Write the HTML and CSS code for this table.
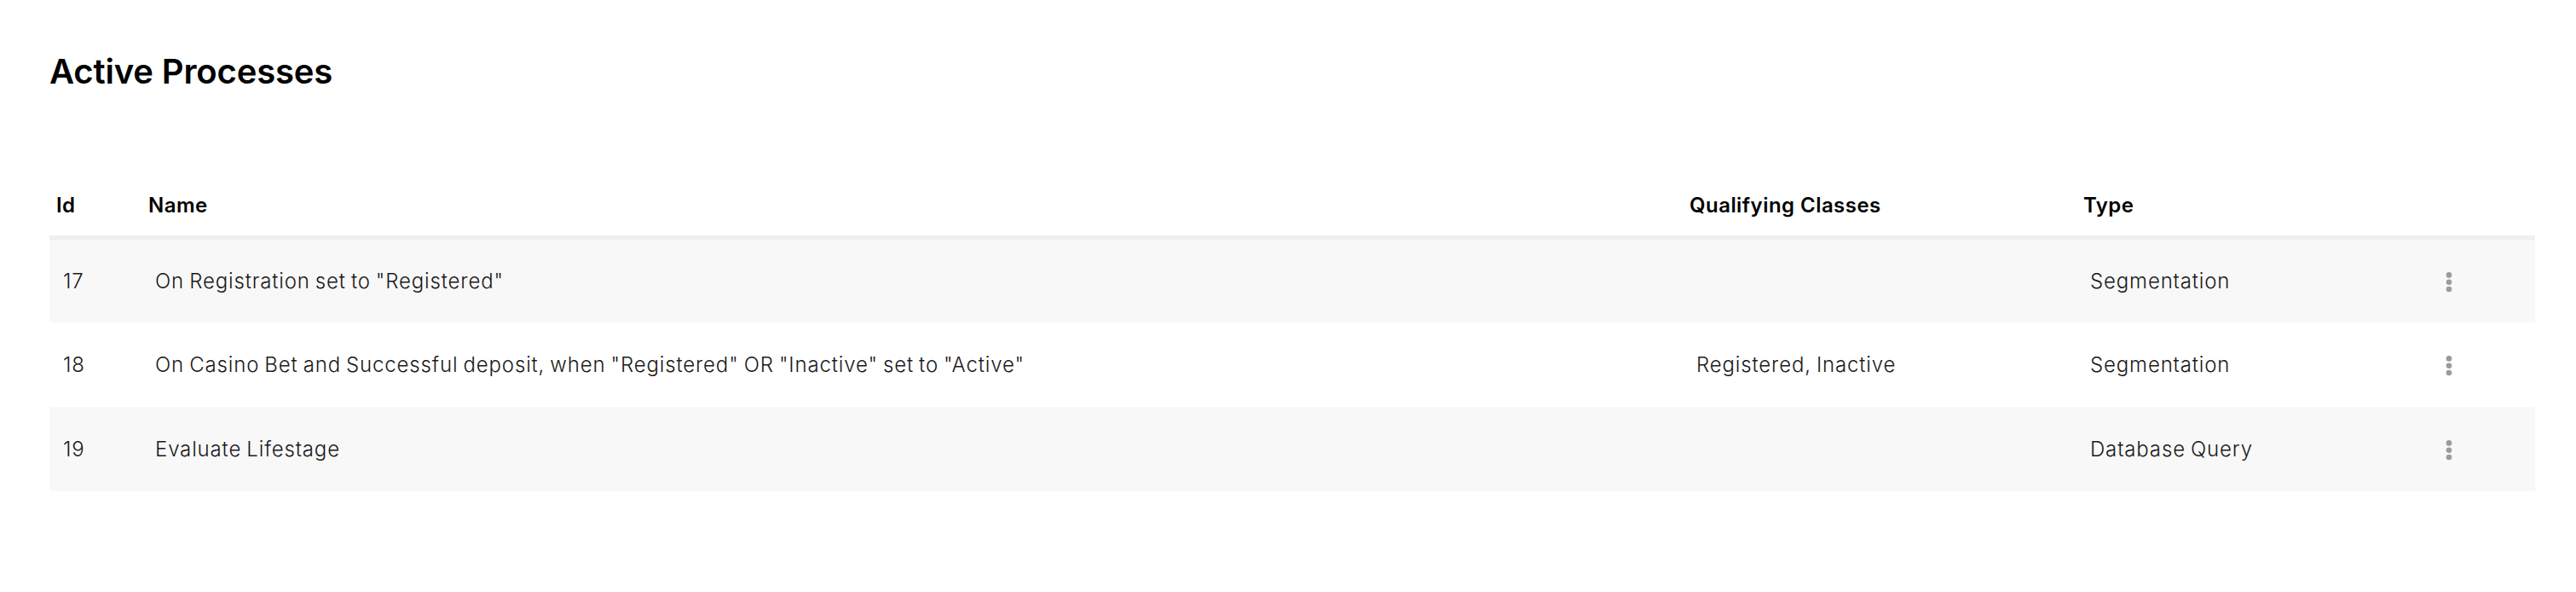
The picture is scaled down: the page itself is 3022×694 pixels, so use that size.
FILE: index.html
```html
<!DOCTYPE html>
<html lang="en">
<head>
<meta charset="utf-8">
<title>Active Processes</title>
<link rel="stylesheet" href="styles.css">
</head>
<body>
<main class="page">
  <h1 class="title">Active Processes</h1>
  <table class="processes">
    <colgroup>
      <col class="col-id">
      <col class="col-name">
      <col class="col-classes">
      <col class="col-type">
      <col class="col-actions">
    </colgroup>
    <thead>
      <tr>
        <th>Id</th>
        <th>Name</th>
        <th>Qualifying Classes</th>
        <th>Type</th>
        <th></th>
      </tr>
    </thead>
    <tbody>
      <tr class="row-shaded">
        <td>17</td>
        <td>On Registration set to "Registered"</td>
        <td></td>
        <td>Segmentation</td>
        <td class="actions"><span class="kebab"><svg width="8" height="26" viewBox="0 0 8 26"><circle cx="4" cy="4.4" r="3.3"/><circle cx="4" cy="12.7" r="3.3"/><circle cx="4" cy="21" r="3.3"/></svg></span></td>
      </tr>
      <tr>
        <td>18</td>
        <td>On Casino Bet and Successful deposit, when "Registered" OR "Inactive" set to "Active"</td>
        <td>Registered, Inactive</td>
        <td>Segmentation</td>
        <td class="actions"><span class="kebab"><svg width="8" height="26" viewBox="0 0 8 26"><circle cx="4" cy="4.4" r="3.3"/><circle cx="4" cy="12.7" r="3.3"/><circle cx="4" cy="21" r="3.3"/></svg></span></td>
      </tr>
      <tr class="row-shaded">
        <td>19</td>
        <td>Evaluate Lifestage</td>
        <td></td>
        <td>Database Query</td>
        <td class="actions"><span class="kebab"><svg width="8" height="26" viewBox="0 0 8 26"><circle cx="4" cy="4.4" r="3.3"/><circle cx="4" cy="12.7" r="3.3"/><circle cx="4" cy="21" r="3.3"/></svg></span></td>
      </tr>
    </tbody>
  </table>
</main>
</body>
</html>
```
FILE: styles.css
```css
html, body {
  margin: 0;
  background: #ffffff;
}

body {
  font-family: Inter, "Noto Sans", sans-serif;
  color: #000000;
}

.page {
  display: flex;
  flex-direction: column;
  gap: 96px;
  padding: 60px 48px 0 58px;
}

.title {
  margin: 0;
  font-size: 40px;
  line-height: 48px;
  font-weight: 600;
  letter-spacing: -0.15px;
  color: #000000;
}

.processes {
  width: 100%;
  table-layout: fixed;
  border-collapse: separate;
  border-spacing: 0;
}

.col-id { width: 108px; }
.col-name { width: 1808px; }
.col-classes { width: 462px; }
.col-type { width: 336px; }
.col-actions { width: 202px; }

.processes th {
  height: 72px;
  padding: 0 8px;
  text-align: left;
  vertical-align: middle;
  font-size: 24px;
  line-height: 29px;
  font-weight: 600;
  letter-spacing: 0.45px;
  color: #000000;
  border-bottom: 5px solid #efefef;
}

.processes td {
  height: 99px;
  padding: 0 16px;
  vertical-align: middle;
  font-size: 24px;
  line-height: 29px;
  font-weight: 300;
  letter-spacing: 0.85px;
  word-spacing: -1.5px;
  color: #1a1a1a;
}

.processes tbody tr:first-child td {
  height: 97px;
}

.row-shaded td {
  background: #f8f8f8;
}

.processes td.actions {
  text-align: center;
  padding: 0;
}

.kebab {
  display: inline-flex;
  vertical-align: middle;
  fill: #9b9b9b;
}
```
